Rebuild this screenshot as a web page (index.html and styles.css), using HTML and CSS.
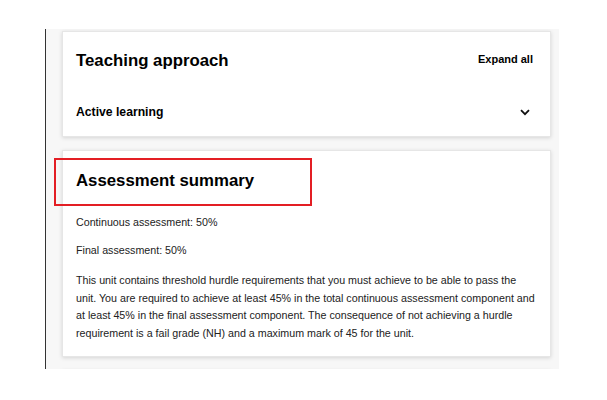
FILE: index.html
```html
<!DOCTYPE html>
<html lang="en">
<head>
<meta charset="utf-8">
<title>Unit</title>
<link rel="stylesheet" href="styles.css">
</head>
<body>
<div class="page">
  <div class="rail">
    <section class="card card-teaching">
      <div class="card-head">
        <h2 class="card-title">Teaching approach</h2>
        <button class="expand">Expand all</button>
      </div>
      <div class="acc-row">
        <span class="acc-label">Active learning</span>
        <svg class="chev" width="10" height="7" viewBox="0 0 10 7"><path d="M1 1.2 L5 5.2 L9 1.2" fill="none" stroke="#111" stroke-width="1.8"/></svg>
      </div>
    </section>
    <section class="card card-assess">
      <div class="highlight"></div>
      <h2 class="card-title">Assessment summary</h2>
      <p class="txt txt-first">Continuous assessment: 50%</p>
      <p class="txt txt-second">Final assessment: 50%</p>
      <p class="txt txt-body">This unit contains threshold hurdle requirements that you must achieve to be able to pass the unit. You are required to achieve at least 45% in the total continuous assessment component and at least 45% in the final assessment component. The consequence of not achieving a hurdle requirement is a fail grade (NH) and a maximum mark of 45 for the unit.</p>
    </section>
    <section class="card card-next"></section>
  </div>
</div>
</body>
</html>
```
FILE: styles.css
```css
html, body {
  margin: 0;
  padding: 0;
  background: #fff;
  font-family: "Liberation Sans", Arial, sans-serif;
  color: #222;
}
.page {
  padding-top: 29px;
  padding-left: 45px;
}
.rail {
  width: 514px;
  height: 340px;
  overflow: hidden;
  border-left: 1px solid #333;
  background: #f7f7f7;
  padding: 2px 8px 0 16px;
  box-sizing: border-box;
  display: flex;
  flex-direction: column;
  gap: 14px;
}
.card {
  position: relative;
  background: #fff;
  border: 1px solid #e6e6e6;
  box-shadow: 0 1px 4px rgba(0,0,0,0.14);
  flex-shrink: 0;
}
.card-teaching {
  padding: 17px 17px 10px 13px;
  height: 106px;
  box-sizing: border-box;
}
.card-head {
  display: flex;
  justify-content: space-between;
  align-items: flex-start;
}
.card-title {
  margin: 0;
  font-size: 16.8px;
  line-height: 24px;
  font-weight: bold;
  color: #000;
}
.expand {
  border: 0;
  background: none;
  padding: 0;
  margin-top: 2px;
  font-family: inherit;
  font-size: 11px;
  font-weight: bold;
  color: #000;
  line-height: 16px;
}
.acc-row {
  margin-top: 24px;
  height: 30px;
  display: flex;
  align-items: center;
  justify-content: space-between;
}
.acc-label {
  font-size: 12.2px;
  font-weight: bold;
  color: #000;
}
.chev {
  display: block;
  margin-right: 3px;
}
.card-assess {
  padding: 18px 12px 13px 13px;
  margin-top: -1px;
}
.highlight {
  position: absolute;
  left: -9px;
  top: 7px;
  width: 258px;
  height: 48px;
  border: 2px solid #e31e24;
  box-sizing: border-box;
}
.txt {
  margin: 0;
  font-size: 10.7px;
  line-height: 17.6px;
  color: #222;
}
.txt-first {
  margin-top: 21px;
}
.txt-second {
  margin-top: 10px;
}
.txt-body {
  margin-top: 13px;
}
.card-next {
  height: 40px;
  margin-top: -1px;
}
```
